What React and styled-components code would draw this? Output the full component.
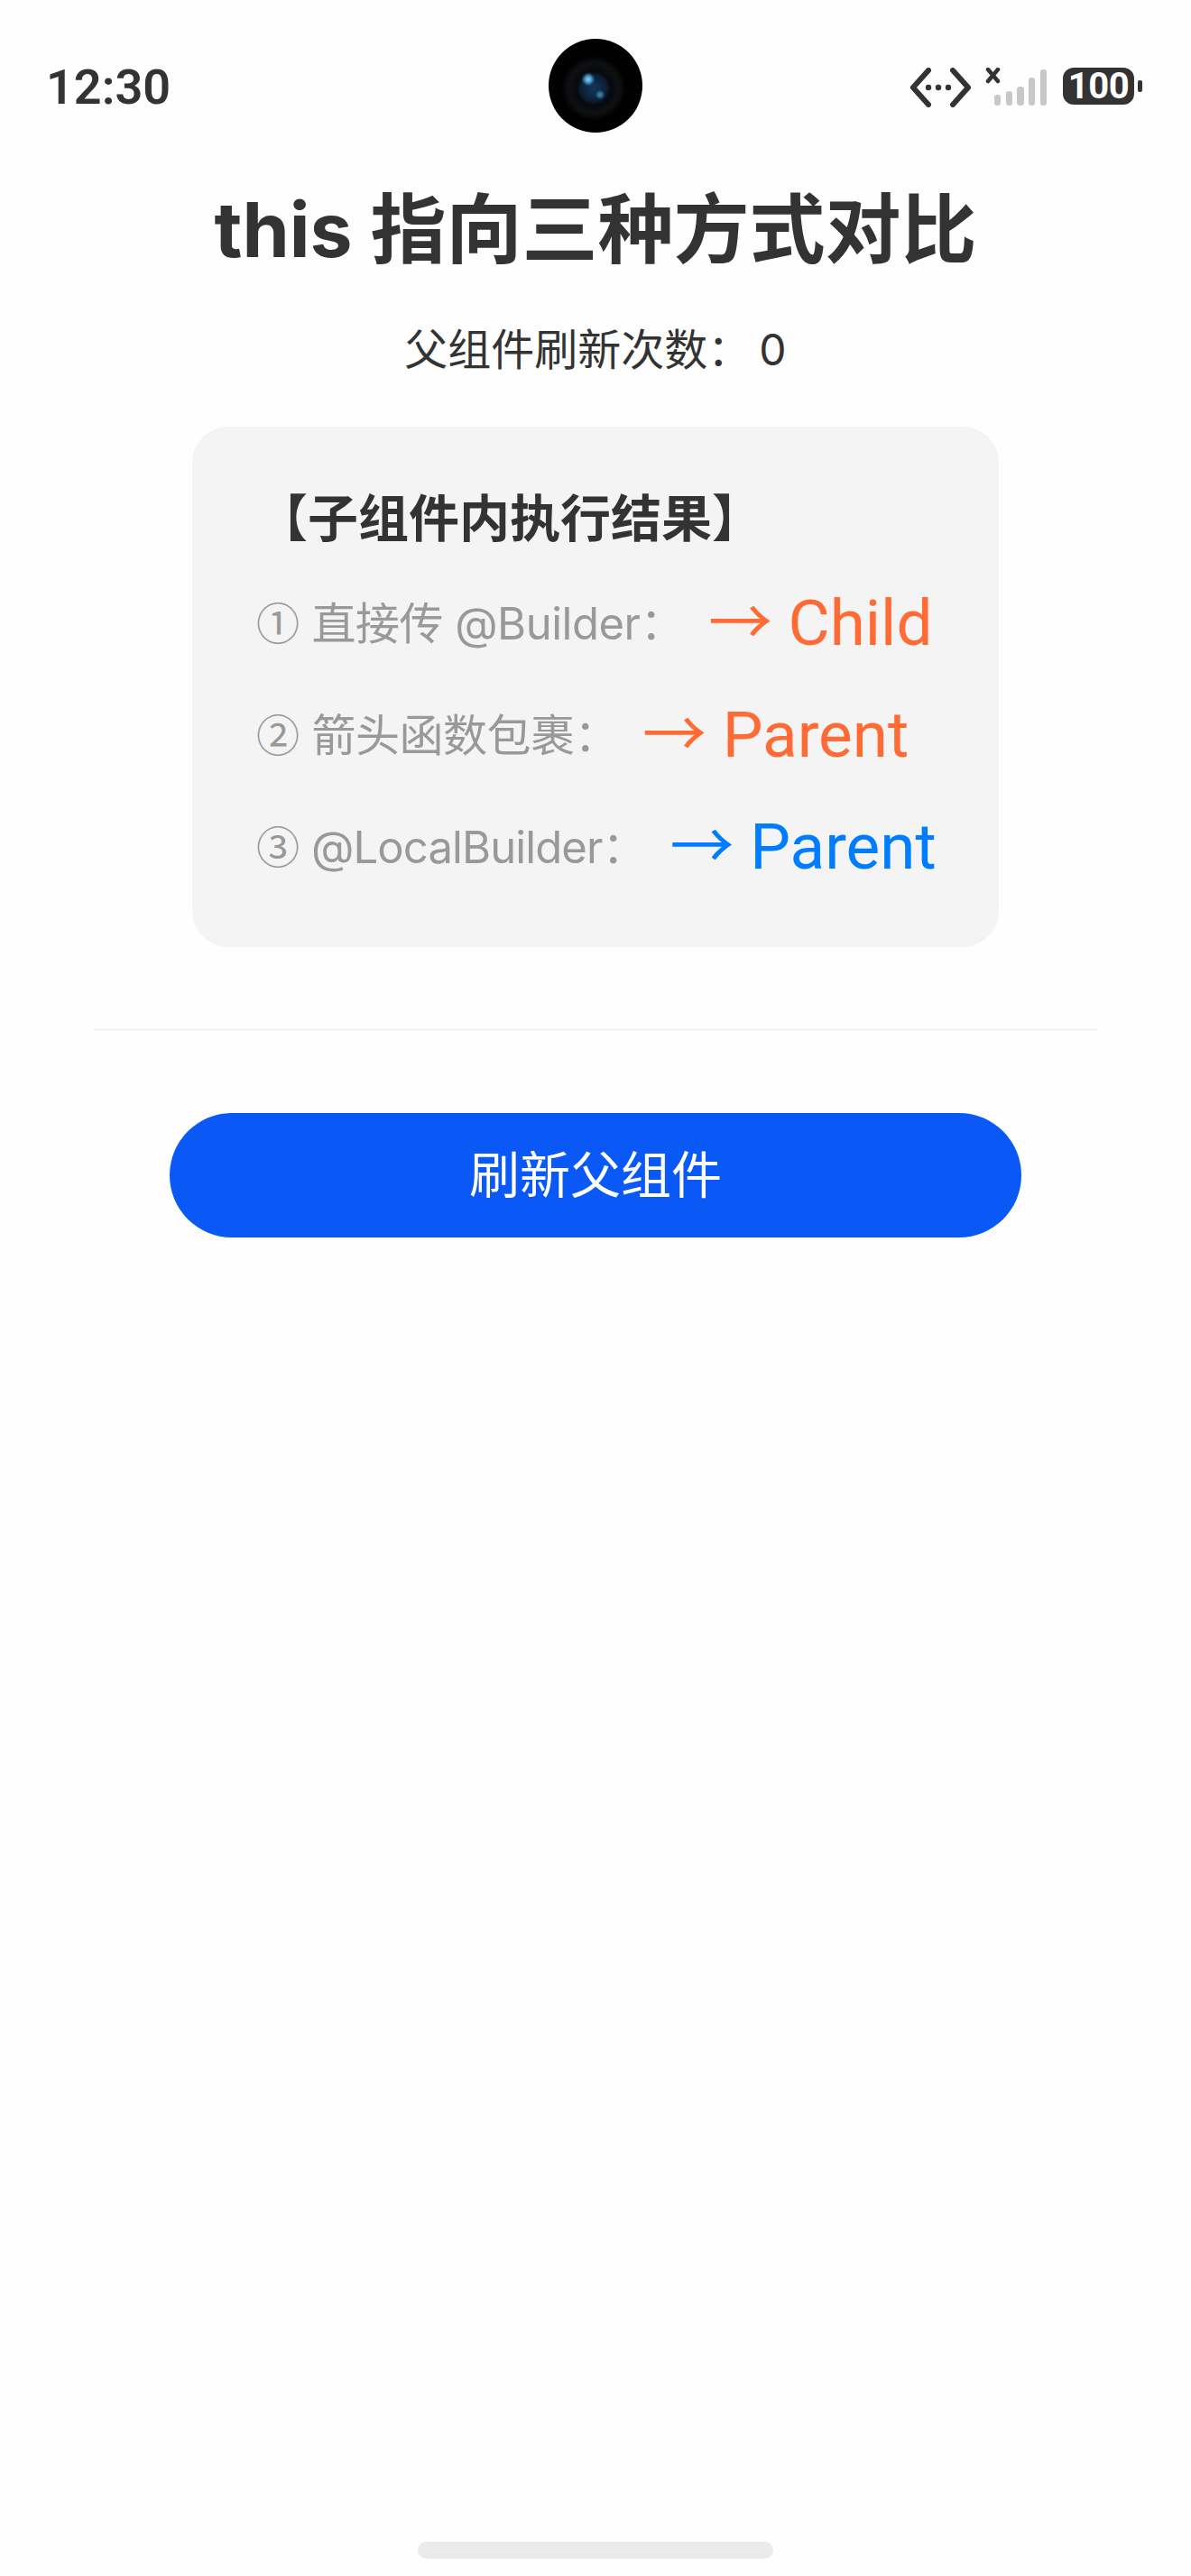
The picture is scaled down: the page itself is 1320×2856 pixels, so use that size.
import React from "react";
import styled, { createGlobalStyle } from "styled-components";

const SANS = `Inter, "Noto Sans CJK SC", sans-serif`;
const ROUND = `Roboto, "Noto Sans CJK SC", sans-serif`;

const Global = createGlobalStyle`
  html, body { margin: 0; padding: 0; background: #fefefe; }
  * { box-sizing: border-box; }
`;

const Page = styled.div`
  position: relative;
  width: 1320px;
  height: 2856px;
  overflow: hidden;
  display: flex;
  flex-direction: column;
  align-items: center;
  background: #fefefe;
  font-family: ${SANS};
  color: #333;
`;

const StatusBar = styled.div`
  width: 100%;
  height: 190px;
  flex: none;
  display: flex;
  align-items: flex-start;
  justify-content: space-between;
  padding: 65px 54px 0 51px;
`;

const Time = styled.div`
  font-family: Roboto, sans-serif;
  font-size: 54px;
  line-height: 64px;
  font-weight: 600;
  color: #333;
`;

const StatusIcons = styled.div`
  display: flex;
  align-items: flex-start;
  padding-top: 10px;
`;

const NetworkSvg = styled.svg`
  margin-right: 10px;
`;

const Battery = styled.div`
  width: 79px;
  height: 41px;
  margin-left: 17px;
  border-radius: 12px;
  background: #333;
  color: #fff;
  display: flex;
  align-items: center;
  justify-content: center;
  font-family: Roboto, sans-serif;
  font-size: 40px;
  font-weight: 700;
  line-height: 41px;
  letter-spacing: -0.5px;
`;

const BatteryNub = styled.div`
  width: 5px;
  height: 13px;
  margin-top: 14px;
  margin-left: 4px;
  border-radius: 2px;
  background: #333;
`;

const CameraWrap = styled.div`
  position: absolute;
  left: 608px;
  top: 43px;
  width: 104px;
  height: 104px;
`;

const Title = styled.h1`
  margin: 15px 0 0;
  font-size: 84px;
  line-height: 100px;
  font-weight: 700;
  color: #333;
  white-space: nowrap;
`;

const Subtitle = styled.div`
  margin-top: 53px;
  font-size: 48px;
  line-height: 60px;
  color: #333;
  white-space: nowrap;
`;

const Count = styled.span`
  margin-left: 9px;
`;

const Card = styled.section`
  margin-top: 55px;
  width: 894px;
  height: 577px;
  flex: none;
  border-radius: 40px;
  background: #f4f4f4;
  padding: 72px 0 0 71px;
  display: flex;
  flex-direction: column;
`;

const CardHeading = styled.div`
  font-size: 56px;
  line-height: 60px;
  font-weight: 700;
  color: #333;
  margin-left: 1px;
  white-space: nowrap;
`;

const Rows = styled.div`
  margin-top: 45px;
  display: flex;
  flex-direction: column;
  gap: 44px;
`;

const Row = styled.div`
  height: 80px;
  display: flex;
  align-items: center;
  gap: 27px;
  white-space: nowrap;
`;

const Label = styled.span`
  font-size: 49px;
  line-height: 80px;
  letter-spacing: ${(p) => p.$tracking || "-0.5px"};
  color: #999;
`;

const Circled = styled.span`
  font-family: "Noto Sans CJK SC", sans-serif;
  font-size: 48px;
  margin-right: 14px;
`;

const Result = styled.span`
  font-family: ${ROUND};
  font-size: 71px;
  line-height: 80px;
  padding-top: 2px;
  color: ${(p) => p.$color};
`;

const Divider = styled.div`
  margin-top: 90px;
  width: 1112px;
  height: 3px;
  flex: none;
  background: #f6f6f6;
`;

const RefreshButton = styled.button`
  margin-top: 91px;
  width: 944px;
  height: 138px;
  flex: none;
  border: 0;
  border-radius: 69px;
  background: #0a59f7;
  color: #fff;
  font-family: ${SANS};
  font-size: 56px;
  line-height: 60px;
`;

const HomeBar = styled.div`
  margin-top: auto;
  margin-bottom: 19px;
  width: 394px;
  height: 19px;
  flex: none;
  border-radius: 10px;
  background: #ebebeb;
`;

const NetworkIcon = () => (
  <NetworkSvg width="72" height="44" viewBox="0 0 72 44" fill="none">
    <path d="M22 3 5 22l17 19M49 3l17 19-17 19" stroke="#333" strokeWidth="6" strokeLinecap="round" strokeLinejoin="round" />
    <circle cx="22" cy="22" r="3.2" fill="#333" />
    <circle cx="33" cy="22" r="3.2" fill="#333" />
    <circle cx="44" cy="22" r="3.2" fill="#333" />
  </NetworkSvg>
);

const SignalIcon = () => (
  <svg width="72" height="44" viewBox="0 0 72 44" fill="none">
    <path d="M6 2l11 13M17 2 6 15" stroke="#333" strokeWidth="4.5" strokeLinecap="round" />
    <g fill="#c8c8c8">
      <rect x="13" y="30" width="7" height="12" rx="3" />
      <rect x="26" y="26" width="7" height="16" rx="3" />
      <rect x="38" y="21" width="8" height="21" rx="3.5" />
      <rect x="51" y="11" width="7" height="31" rx="3" />
      <rect x="64" y="2" width="7" height="40" rx="3" />
    </g>
  </svg>
);

const Camera = () => (
  <svg width="104" height="104" viewBox="0 0 104 104">
    <defs>
      <radialGradient id="lens" cx="50%" cy="50%" r="50%">
        <stop offset="0%" stopColor="#14365a" />
        <stop offset="40%" stopColor="#0b1e33" />
        <stop offset="52%" stopColor="#07090c" />
        <stop offset="78%" stopColor="#0f1012" />
        <stop offset="100%" stopColor="#000" />
      </radialGradient>
      <radialGradient id="glint">
        <stop offset="0%" stopColor="#8fd2f2" />
        <stop offset="50%" stopColor="#3f8dbd" />
        <stop offset="100%" stopColor="#1d4f80" stopOpacity="0" />
      </radialGradient>
    </defs>
    <circle cx="52" cy="52" r="52" fill="#000" />
    <circle cx="50" cy="55" r="36" fill="url(#lens)" />
    <circle cx="44" cy="45" r="8" fill="url(#glint)" />
    <circle cx="57" cy="62" r="6" fill="url(#glint)" opacity="0.55" />
  </svg>
);

export default function App() {
  return (
    <Page>
      <Global />
      <StatusBar>
        <Time>12:30</Time>
        <StatusIcons>
          <NetworkIcon />
          <SignalIcon />
          <Battery>100</Battery>
          <BatteryNub />
        </StatusIcons>
      </StatusBar>
      <CameraWrap>
        <Camera />
      </CameraWrap>
      <Title>this 指向三种方式对比</Title>
      <Subtitle>父组件刷新次数：<Count>0</Count></Subtitle>
      <Card>
        <CardHeading>【子组件内执行结果】</CardHeading>
        <Rows>
          <Row>
            <Label><Circled>①</Circled>直接传 @Builder：</Label>
            <Result $color="#ff6b35">→ Child</Result>
          </Row>
          <Row>
            <Label><Circled>②</Circled>箭头函数包裹：</Label>
            <Result $color="#ff6b35">→ Parent</Result>
          </Row>
          <Row>
            <Label $tracking="-0.9px"><Circled>③</Circled>@LocalBuilder：</Label>
            <Result $color="#007dff">→ Parent</Result>
          </Row>
        </Rows>
      </Card>
      <Divider />
      <RefreshButton>刷新父组件</RefreshButton>
      <HomeBar />
    </Page>
  );
}
